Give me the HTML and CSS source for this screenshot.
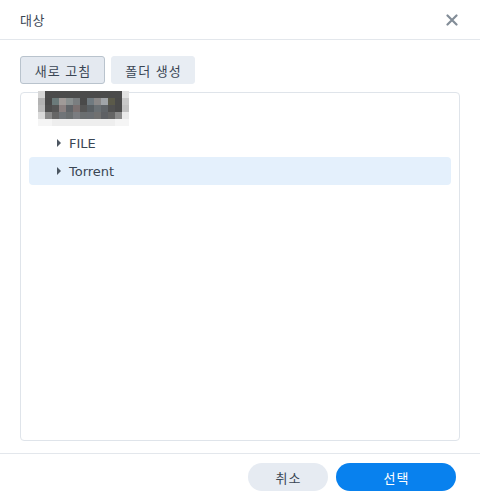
FILE: index.html
```html
<!DOCTYPE html>
<html lang="ko">
  <head>
    <meta charset="UTF-8" />
    <meta name="viewport" content="width=device-width, initial-scale=1.0" />
    <title>대상</title>
    <link rel="stylesheet" href="styles.css">
  </head>
  <body>
    <div class="dialog">
      <div class="header">
        <span class="title">대상</span>
        <svg class="close" width="12" height="12" viewBox="0 0 12 12">
          <path d="M1.5 1.5 L10.5 10.5 M10.5 1.5 L1.5 10.5" stroke="#838d98" stroke-width="2.2" stroke-linecap="round" />
        </svg>
      </div>

      <div class="content">
        <div class="toolbar">
          <button class="tool-btn active">새로 고침</button>
          <button class="tool-btn">폴더 생성</button>
        </div>

        <div class="tree">
          <div class="tree-root">
            <svg class="blur" width="91" height="35" viewBox="0 0 13 5" shape-rendering="crispEdges">
              <rect x="0" y="0" width="1" height="1" fill="#d6d6d6" />
              <rect x="1" y="0" width="11" height="1" fill="#4b4b4b" />
              <rect x="12" y="0" width="1" height="1" fill="#e2e2e2" />

              <rect x="0" y="1" width="1" height="1" fill="#b3b3b3" />
              <rect x="1" y="1" width="1" height="1" fill="#4a4a4a" />
              <rect x="2" y="1" width="1" height="1" fill="#6b7a7a" />
              <rect x="3" y="1" width="1" height="1" fill="#a09a98" />
              <rect x="4" y="1" width="1" height="1" fill="#8a9090" />
              <rect x="5" y="1" width="1" height="1" fill="#7a7e80" />
              <rect x="6" y="1" width="1" height="1" fill="#4a4a4a" />
              <rect x="7" y="1" width="1" height="1" fill="#707a80" />
              <rect x="8" y="1" width="1" height="1" fill="#8a8888" />
              <rect x="9" y="1" width="1" height="1" fill="#a0a4a8" />
              <rect x="10" y="1" width="1" height="1" fill="#5b5a4a" />
              <rect x="11" y="1" width="1" height="1" fill="#4a4a4a" />
              <rect x="12" y="1" width="1" height="1" fill="#c9c9c9" />

              <rect x="0" y="2" width="1" height="1" fill="#bababa" />
              <rect x="1" y="2" width="1" height="1" fill="#4e4e4e" />
              <rect x="2" y="2" width="1" height="1" fill="#555555" />
              <rect x="3" y="2" width="1" height="1" fill="#8a8080" />
              <rect x="4" y="2" width="1" height="1" fill="#606468" />
              <rect x="5" y="2" width="1" height="1" fill="#7a7070" />
              <rect x="6" y="2" width="1" height="1" fill="#555555" />
              <rect x="7" y="2" width="1" height="1" fill="#5a6064" />
              <rect x="8" y="2" width="1" height="1" fill="#6a7074" />
              <rect x="9" y="2" width="1" height="1" fill="#606468" />
              <rect x="10" y="2" width="1" height="1" fill="#505050" />
              <rect x="11" y="2" width="1" height="1" fill="#4a4a4a" />
              <rect x="12" y="2" width="1" height="1" fill="#c2c2c2" />

              <rect x="0" y="3" width="1" height="1" fill="#dadada" />
              <rect x="1" y="3" width="1" height="1" fill="#8a8a8a" />
              <rect x="2" y="3" width="1" height="1" fill="#666666" />
              <rect x="3" y="3" width="1" height="1" fill="#707478" />
              <rect x="4" y="3" width="1" height="1" fill="#6a6e70" />
              <rect x="5" y="3" width="1" height="1" fill="#7a7c80" />
              <rect x="6" y="3" width="1" height="1" fill="#6a6e70" />
              <rect x="7" y="3" width="1" height="1" fill="#6a6e72" />
              <rect x="8" y="3" width="1" height="1" fill="#707070" />
              <rect x="9" y="3" width="1" height="1" fill="#5e6064" />
              <rect x="10" y="3" width="1" height="1" fill="#656565" />
              <rect x="11" y="3" width="1" height="1" fill="#8a8a8a" />
              <rect x="12" y="3" width="1" height="1" fill="#eaeaea" />

              <rect x="0" y="4" width="13" height="1" fill="#f5f5f5" />
              <rect x="2" y="4" width="9" height="1" fill="#eeeeee" />
            </svg>
          </div>
          <div class="tree-item">
            <span class="arrow"></span>
            <span class="label">FILE</span>
          </div>
          <div class="tree-item selected">
            <span class="arrow"></span>
            <span class="label">Torrent</span>
          </div>
        </div>
      </div>

      <div class="footer">
        <button class="btn btn-cancel">취소</button>
        <button class="btn btn-primary">선택</button>
      </div>
    </div>
  </body>
</html>
```

FILE: styles.css
```css
body {
  margin: 0;
  font-family: "Noto Sans CJK KR", "DejaVu Sans", sans-serif;
  background: white;
  color: #3a4654;
}
.dialog {
  width: 480px;
  height: 500px;
  display: flex;
  flex-direction: column;
}
.header {
  height: 39px;
  border-bottom: 1px solid #e3e7ec;
  display: flex;
  align-items: center;
  justify-content: space-between;
  padding: 0 22px 0 20px;
}
.title {
  font-size: 13px;
  letter-spacing: 0.5px;
  color: #3a4654;
}
.content {
  flex: 1;
  display: flex;
  flex-direction: column;
  padding: 16px 20px 12px;
  min-height: 0;
}
.toolbar {
  display: flex;
  gap: 6px;
  margin-bottom: 8px;
}
.tool-btn {
  height: 28px;
  padding: 0 0 0 1px;
  font-family: "Noto Sans CJK KR", sans-serif;
  font-size: 13px;
  letter-spacing: 1px;
  color: #3a4654;
  background: #e8edf3;
  border: 1px solid #e8edf3;
  border-radius: 3px;
  width: 84px;
}
.tool-btn.active {
  background: #e4e9f0;
  border-color: #b9c3cd;
  width: 85px;
}
.tree {
  flex: 1;
  border: 1px solid #dfe4ea;
  border-radius: 4px;
  padding: 0 8px;
}
.tree-root {
  display: flow-root;
  height: 36px;
}
.blur {
  display: block;
  margin: -2px 0 0 9px;
}
.tree-item {
  height: 28px;
  display: flex;
  align-items: center;
  border-radius: 4px;
  font-family: "DejaVu Sans", sans-serif;
  font-size: 13px;
  color: #3a4654;
}
.tree-item.selected {
  background: #e4f0fc;
}
.arrow {
  width: 0;
  height: 0;
  border-top: 4px solid transparent;
  border-bottom: 4px solid transparent;
  border-left: 4px solid #4c5661;
  margin: 0 8px 0 28px;
}
.footer {
  height: 47px;
  border-top: 1px solid #e3e7ec;
  display: flex;
  justify-content: flex-end;
  align-items: flex-start;
  gap: 8px;
  padding: 9px 24px 0 0;
  box-sizing: border-box;
}
.btn {
  height: 28px;
  border: none;
  border-radius: 14px;
  padding: 0 0 0 1px;
  font-family: "Noto Sans CJK KR", sans-serif;
  font-size: 13px;
  letter-spacing: 1px;
}
.btn-cancel {
  width: 80px;
  background: #e6ebf2;
  color: #3a4654;
}
.btn-primary {
  width: 120px;
  background: #0881ee;
  color: white;
}
```
